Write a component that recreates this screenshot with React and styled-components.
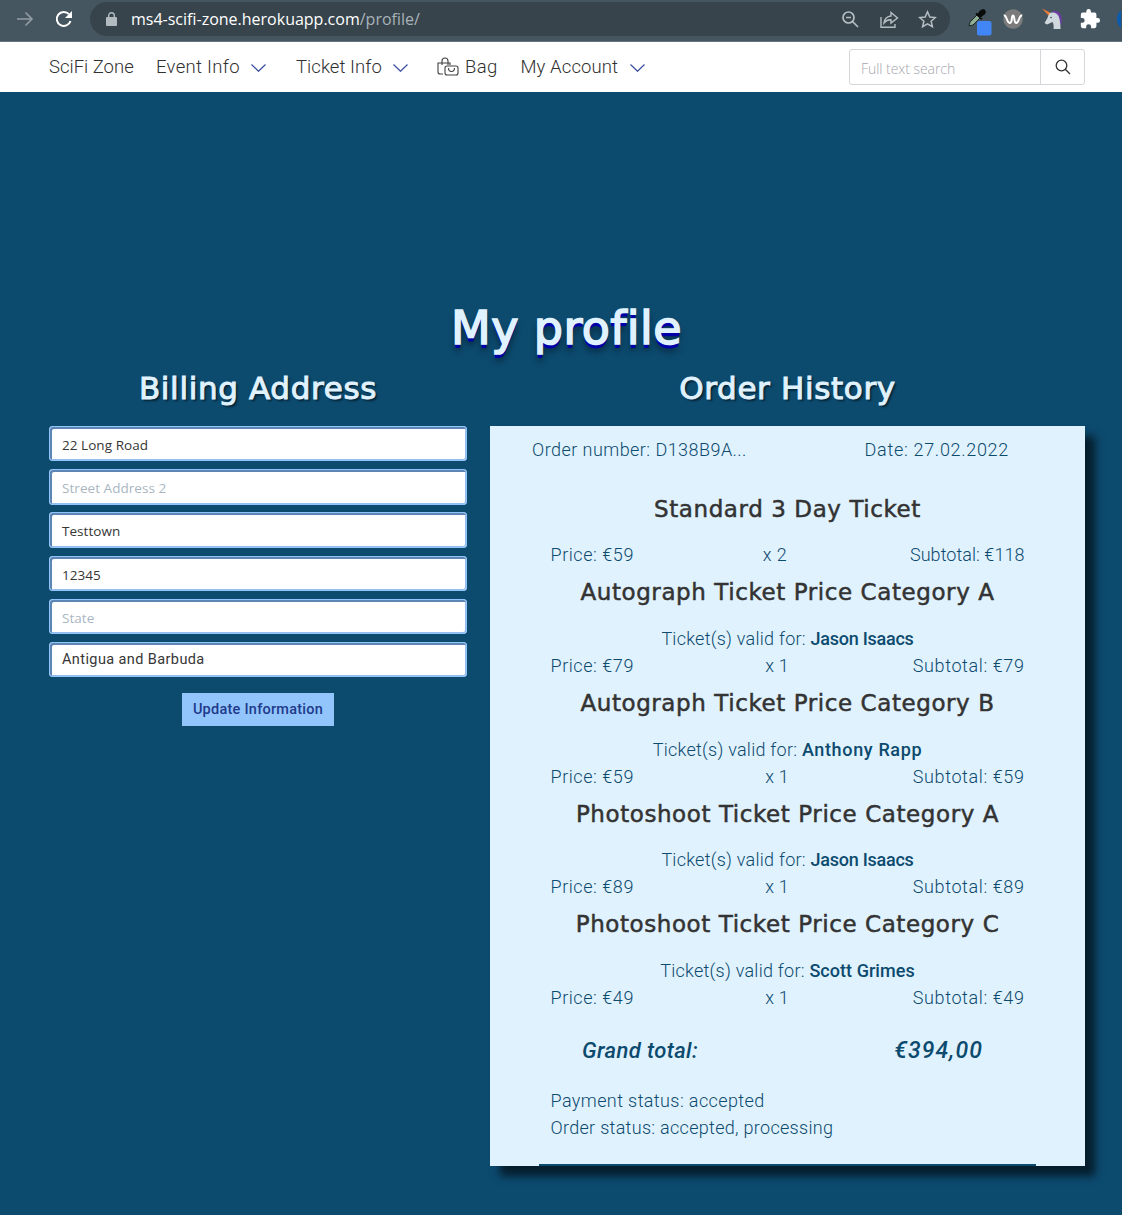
import React from "react";
import styled, { createGlobalStyle, css } from "styled-components";

const Global = createGlobalStyle`
  * { box-sizing: border-box; }
  body { margin: 0; background: #0c4a6e; overflow: hidden; }
  h1, h2, h3 { margin: 0; font-weight: 400; }
  p { margin: 0; }
`;

const body = css`
  font-family: "Roboto", "Liberation Sans", sans-serif;
  font-weight: 300;
`;
const display = css`
  font-family: "DejaVu Sans", "Liberation Sans", sans-serif;
  font-variant-ligatures: none;
`;

const Page = styled.div`
  ${body}
  width: 1122px;
  height: 1215px;
  overflow: hidden;
  background: #0c4a6e;
  color: #0c4a6e;
`;

/* Browser toolbar */
const Chrome = styled.div`
  display: flex;
  align-items: center;
  height: 42px;
  padding: 0 0 3px 17px;
  background: #455660;
  border-bottom: 1px solid #69757e;
`;
const Reload = styled.div`
  display: flex;
  margin: 0 17px 0 21px;
`;
const AddressBar = styled.div`
  display: flex;
  align-items: center;
  width: 860px;
  height: 34px;
  padding: 0 13px 0 16px;
  border-radius: 17px;
  background: #37444c;
`;
const Url = styled.div`
  flex: 1;
  margin-left: 14px;
  font: 400 16px "Open Sans", "Noto Sans", sans-serif;
  letter-spacing: 0;
  color: #fff;
  white-space: nowrap;
`;
const UrlPath = styled.span`
  color: #a9b2b8;
`;
const BarIcons = styled.div`
  display: flex;
  gap: 19px;
`;
const Extensions = styled.div`
  display: flex;
  align-items: center;
  flex: none;
  width: 171px;
  padding-left: 16px;
  gap: 16px;
  overflow: hidden;
  svg { flex: none; }
  svg:first-child { margin-right: -6px; }
  svg:nth-child(2) { margin-right: 2px; }
`;

/* Site navigation */
const Nav = styled.nav`
  display: flex;
  align-items: center;
  height: 50px;
  padding: 0 37px 0 49px;
  background: #fff;
`;
const NavItem = styled.a`
  display: flex;
  align-items: center;
  width: ${(p) => p.$width}px;
  font-size: 18.5px;
  line-height: 26px;
  letter-spacing: ${(p) => p.$track || 0}px;
  color: #303030;
  white-space: nowrap;
  svg { flex: none; }
`;
const NavLabel = styled.span`
  width: ${(p) => p.$width}px;
`;
const BagSlot = styled.span`
  display: flex;
  width: 28px;
`;
const Search = styled.div`
  display: flex;
  width: 236px;
  height: 36px;
  margin-left: auto;
  border: 1px solid #d6d6da;
  border-radius: 3px;
`;
const SearchField = styled.div`
  flex: 1;
  padding: 1px 0 0 11px;
  font: 300 14px/35px "Open Sans", sans-serif;
  letter-spacing: -0.05px;
  color: #a6a6ae;
`;
const SearchButton = styled.div`
  display: flex;
  align-items: center;
  justify-content: center;
  width: 44px;
  border-left: 1px solid #d6d6da;
`;

/* Profile */
const Title = styled.h1`
  ${display}
  padding: 206px 0 0 11px;
  text-align: center;
  font-size: 46px;
  line-height: 61px;
  letter-spacing: 0.4px;
  color: #e0f2fe;
  -webkit-text-stroke: 1.6px #e0f2fe;
  text-shadow: 0 2px 0 #0000a8, 0 4px 0 #0000a8, 0 7px 6px rgba(0, 0, 0, 0.5);
`;
const Columns = styled.div`
  display: grid;
  grid-template-columns: 418px 595px;
  column-gap: 23px;
  padding: 7px 0 0 49px;
`;
const Heading = styled.h2`
  ${display}
  height: 60px;
  text-align: center;
  font-size: 31px;
  line-height: 45px;
  letter-spacing: 0.65px;
  color: #e0f2fe;
  -webkit-text-stroke: 1px #e0f2fe;
  text-shadow: 2px 2px 2px rgba(0, 0, 0, 0.55);
`;
const Form = styled.form`
  display: flex;
  flex-direction: column;
  align-items: center;
  gap: 7.8px;
`;
const Field = styled.div`
  width: 100%;
  height: 35.4px;
  padding: 3px 12px 0;
  border: 1px solid #93c5fd;
  border-radius: 3px;
  background: #fff;
  box-shadow: inset 2px 2px 0 #5d86b5, inset -1px -1px 0 #93bdec;
  font: 400 13.5px/31px "Open Sans", sans-serif;
  letter-spacing: 0.05px;
  color: ${(p) => (p.$empty ? "#a9b6c2" : "#363636")};
`;
const Select = styled(Field)`
  padding-top: 2px;
  font: 400 14.5px/29px "Roboto", sans-serif;
  letter-spacing: 0.4px;
`;
const Update = styled.button`
  width: 152px;
  height: 33px;
  margin-top: 8px;
  padding: 0;
  border: 0;
  background: #93c5fd;
  color: #1e3a8a;
  font: 500 14.5px/33px "Roboto", sans-serif;
  letter-spacing: 0.25px;
`;

const Order = styled.section`
  display: flex;
  flex-direction: column;
  height: 740px;
  padding: 10px 49px 0;
  background: #e0f2fe;
  box-shadow: 10px 10px 8px rgba(0, 0, 0, 0.6);
  font-size: 18px;
  line-height: 27px;
  letter-spacing: 0.45px;
`;
const OrderMeta = styled.div`
  display: flex;
  justify-content: space-between;
  margin: 0 27px 21.8px -7px;
  span:last-child { letter-spacing: 0.7px; }
`;
const Item = styled.article`
  padding: 0 11.5px;
`;
const ItemTitle = styled.h3`
  ${display}
  margin-bottom: 7.67px;
  text-align: center;
  white-space: nowrap;
  font-size: 23px;
  line-height: 49px;
  letter-spacing: 0.58px;
  color: #333;
  -webkit-text-stroke: 0.5px #333;
`;
const Valid = styled.p`
  text-align: center;
  letter-spacing: 0.25px;
`;
const Guest = styled.strong`
  font-weight: 500;
  letter-spacing: ${(p) => p.$track}px;
`;
const PriceRow = styled.div`
  display: grid;
  grid-template-columns: ${(p) => (p.$wide ? 165 : 169)}px 1fr 190px;
  text-align: center;
  span { letter-spacing: ${(p) => (p.$wide ? 0.45 : 0.2)}px; }
  span:first-child { text-align: left; letter-spacing: 0.55px; }
  span:last-child { text-align: right; letter-spacing: ${(p) => (p.$wide ? 0.05 : 0.6)}px; }
`;
const Total = styled.div`
  display: flex;
  justify-content: space-between;
  height: 76px;
  padding: 0 53px 0 43px;
  font-size: 22px;
  font-style: italic;
  font-weight: 500;
  line-height: 80px;
  letter-spacing: 0.4px;
  span:last-child { font-size: 23px; letter-spacing: 1.1px; }
`;
const Status = styled.p`
  padding-left: 11.5px;
  letter-spacing: ${(p) => p.$track}px;
`;
const Rule = styled.div`
  height: 2px;
  margin-top: auto;
  background: #0c4a6e;
`;

const Chevron = () => (
  <svg width="15" height="10" viewBox="0 0 15 10" fill="none" stroke="#3b4fa0" strokeWidth="1.2">
    <path d="M.5 2.500 7.500 9.300 14.500 2.500" />
  </svg>
);
const BagIcon = () => (
  <svg width="22" height="21" viewBox="0 0 22 21" fill="none" stroke="#404040" strokeWidth="1.1">
    <path d="M6 17H3Q1 17 1 15V6H13V8M5 8V4Q5 1 8 1T11 4V8" />
    <rect x="8" y="9" width="13" height="9" rx="2" />
    <path d="M11.500 11Q11.500 14.500 14.500 14.500T17.500 11" />
  </svg>
);

const items = [
  { name: "Standard 3 Day Ticket", price: 59, qty: 2, total: 118 },
  { name: "Autograph Ticket Price Category A", guest: "Jason Isaacs", track: -0.25, price: 79, qty: 1, total: 79 },
  { name: "Autograph Ticket Price Category B", guest: "Anthony Rapp", track: 0.65, price: 59, qty: 1, total: 59 },
  { name: "Photoshoot Ticket Price Category A", guest: "Jason Isaacs", track: -0.25, price: 89, qty: 1, total: 89 },
  { name: "Photoshoot Ticket Price Category C", guest: "Scott Grimes", track: 0.05, price: 49, qty: 1, total: 49 },
];

const BrowserBar = () => (
  <Chrome>
    <svg width="17" height="16" viewBox="0 0 17 16" fill="none" stroke="#929ca3" strokeWidth="1.6">
      <path d="M0 8H15M8.500 1.500 15 8 8.500 14.500" />
    </svg>
    <Reload>
      <svg width="18" height="18" viewBox="0 0 18 18" fill="none" stroke="#fff" strokeWidth="2">
        <path d="M15.500 11A7 7 0 1 1 14 4.200" />
        <path d="M17 1V8H10Z" fill="#fff" stroke="none" />
      </svg>
    </Reload>
    <AddressBar>
      <svg width="11" height="14" viewBox="0 0 11 14">
        <rect y="5" width="11" height="9" rx="1" fill="#b3bac0" />
        <path d="M2.700 6V3.500a2.800 2.800 0 0 1 5.600 0V6" fill="none" stroke="#b3bac0" strokeWidth="1.400" />
      </svg>
      <Url>ms4-scifi-zone.herokuapp.com<UrlPath>/profile/</UrlPath></Url>
      <BarIcons>
        <svg width="19" height="19" viewBox="0 0 19 19" fill="none" stroke="#b5bdc3" strokeWidth="1.7">
          <circle cx="7.500" cy="7.500" r="5.500" /><path d="M11.500 11.500 17 17M5 7.500H10" />
        </svg>
        <svg width="20" height="19" viewBox="0 0 20 19" fill="none" stroke="#b5bdc3" strokeWidth="1.4">
          <path d="M2 7V17.200H16V14M5 13Q6 6.500 12 6V2.500L18.500 8 12 13V9.800Q8 9.500 5 13Z" />
        </svg>
        <svg width="19" height="19" viewBox="0 0 19 19" fill="none" stroke="#b5bdc3" strokeWidth="1.500">
          <path d="M9.500 1.800 11.800 7 17.300 7.500 13.100 11.200 14.400 16.700 9.500 13.800 4.600 16.700 5.900 11.200 1.700 7.500 7.200 7Z" />
        </svg>
      </BarIcons>
    </AddressBar>
    <Extensions>
      <svg width="27" height="34" viewBox="0 0 27 34">
        <path d="M3 24 4 20 11 13 14 16 7 23Z" fill="#8fae93" stroke="#1b2723" />
        <path d="M10 11.500 16 17M12 13 14.500 9.500Q17 7 18.500 9T16 13L14 15Z" fill="#0b0d0d" stroke="#0b0d0d" strokeWidth="2" />
        <rect x="11" y="19" width="14.500" height="14.500" rx="2" fill="#4285f4" />
      </svg>
      <svg width="20" height="20" viewBox="0 0 20 20">
        <circle cx="10" cy="10" r="9.800" fill="#7b7b7b" />
        <path d="M.8 6.500C4 5.500 3.500 14 6.700 14S8 6.500 10 6.500 10.500 14 13.300 14 16 5.500 19.200 6.500" fill="none" stroke="#fff" strokeWidth="2" />
      </svg>
      <svg width="22" height="22" viewBox="0 0 22 22">
        <path d="M11 3Q20 1.500 21 12L20 17H17L13 6Z" fill="#6b3fa0" />
        <path d="M8 5Q15 3 17.500 8Q19.500 13 19.500 21H12.500Q13 16 11.500 14L6 16.500 3.500 15 6.500 10Z" fill="#cfd8dc" />
        <path d="M1 .5 9 4.500 7.500 7.500Z" fill="#ef7a33" />
        <circle cx="10" cy="9.500" r=".8" fill="#37444c" />
      </svg>
      <svg width="22" height="22" viewBox="0 0 24 24" fill="#fff">
        <path d="M20.500 11H19V7a2 2 0 0 0-2-2h-4V3.500a2.500 2.500 0 0 0-5 0V5H4a2 2 0 0 0-2 2v3.800h1.500a2.700 2.700 0 0 1 0 5.400H2V20a2 2 0 0 0 2 2h3.800v-1.500a2.700 2.700 0 0 1 5.400 0V22H17a2 2 0 0 0 2-2v-4h1.500a2.500 2.500 0 0 0 0-5Z" />
      </svg>
      <svg width="24" height="24" viewBox="0 0 24 24"><circle cx="12" cy="12" r="12" fill="#0b5cad" /></svg>
    </Extensions>
  </Chrome>
);

export default function App() {
  return (
    <Page>
      <Global />
      <BrowserBar />
      <Nav>
        <NavItem $width={107}>SciFi Zone</NavItem>
        <NavItem $width={140} $track={0.3}><NavLabel $width={95}>Event Info</NavLabel><Chevron /></NavItem>
        <NavItem $width={141} $track={0.05}><NavLabel $width={97}>Ticket Info</NavLabel><Chevron /></NavItem>
        <NavItem $width={83.5} $track={0.4}><BagSlot><BagIcon /></BagSlot>Bag</NavItem>
        <NavItem $width={130} $track={0.1}><NavLabel $width={109}>My Account</NavLabel><Chevron /></NavItem>
        <Search>
          <SearchField>Full text search</SearchField>
          <SearchButton>
            <svg width="16" height="16" viewBox="0 0 16 16" fill="none" stroke="#333" strokeWidth="1.300">
              <circle cx="6.500" cy="6.500" r="5.300" /><path d="M10.300 10.300 15 15" />
            </svg>
          </SearchButton>
        </Search>
      </Nav>
      <Title>My profile</Title>
      <Columns>
        <div>
          <Heading>Billing Address</Heading>
          <Form>
            <Field>22 Long Road</Field>
            <Field $empty>Street Address 2</Field>
            <Field>Testtown</Field>
            <Field>12345</Field>
            <Field $empty>State</Field>
            <Select>Antigua and Barbuda</Select>
            <Update type="button">Update Information</Update>
          </Form>
        </div>
        <div>
          <Heading>Order History</Heading>
          <Order>
            <OrderMeta><span>Order number: D138B9A...</span><span>Date: 27.02.2022</span></OrderMeta>
            {items.map((item) => (
              <Item key={item.name}>
                <ItemTitle>{item.name}</ItemTitle>
                {item.guest && <Valid>Ticket(s) valid for: <Guest $track={item.track}>{item.guest}</Guest></Valid>}
                <PriceRow $wide={item.total > 99}>
                  <span>Price: €{item.price}</span>
                  <span>x {item.qty}</span>
                  <span>Subtotal: €{item.total}</span>
                </PriceRow>
              </Item>
            ))}
            <Total><span>Grand total:</span><span>€394,00</span></Total>
            <Status $track={0.4}>Payment status: accepted</Status>
            <Status $track={0.3}>Order status: accepted, processing</Status>
            <Rule />
          </Order>
        </div>
      </Columns>
    </Page>
  );
}
